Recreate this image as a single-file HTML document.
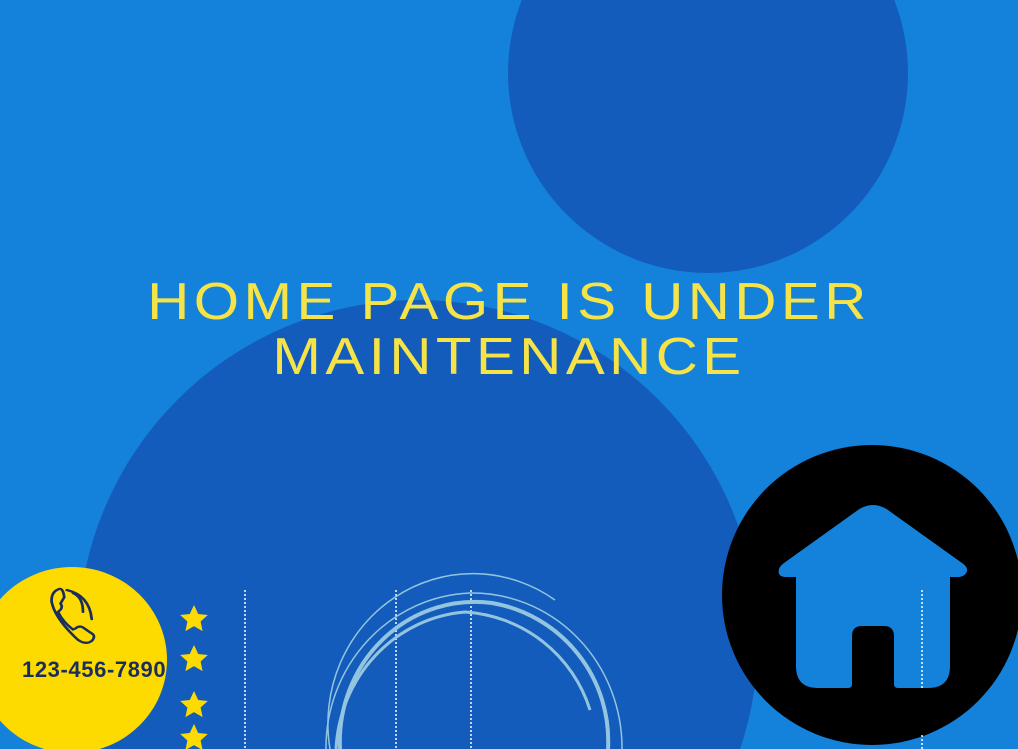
<!DOCTYPE html>
<html><head><style>
html,body{margin:0;padding:0;overflow:hidden;width:1018px;height:749px}
body{position:relative;background:#1482db;font-family:"Liberation Sans",sans-serif}
.t{position:absolute;left:0;width:1018px;text-align:center;color:#f5e348;font-size:52px;letter-spacing:4px;line-height:56px;white-space:nowrap;transform:scaleX(1.12);transform-origin:509px 0}
</style></head><body>
<svg width="1018" height="749" style="position:absolute;left:0;top:0">
<circle cx="708" cy="73" r="200" fill="#145cbb"/>
<circle cx="418" cy="640" r="340" fill="#145cbb"/>
<circle cx="872" cy="595" r="150" fill="#000"/>
<path d="M796 577 H786 Q777 577 779 569 Q780 566 784 563 L858 510 Q873 500 888 510 L962 563 Q968 567 967 571 Q965 577 958 577 H950 V666 Q950 688 928 688 H898 Q894 688 894 684 V636 Q894 626 884 626 H862 Q852 626 852 636 V684 Q852 688 848 688 H818 Q796 688 796 666 Z" fill="#1482db"/>
<ellipse cx="72" cy="660" rx="95" ry="93" fill="#fddb00"/>
<g stroke="#fff" stroke-width="1.5" stroke-dasharray="2 2">
<line x1="245" y1="590" x2="245" y2="749"/>
<line x1="396" y1="590" x2="396" y2="749"/>
<line x1="471" y1="590" x2="471" y2="749"/>
<line x1="922" y1="590" x2="922" y2="688"/>
<line x1="922" y1="735" x2="922" y2="749"/>
</g>
<g fill="none" stroke="#93c5e0">
<path d="M330 749 A145 150 0 0 1 555 600" stroke-width="1.5"/>
<path d="M340 749 A135 140 0 0 1 492 603 A140 140 0 0 1 608 749" stroke-width="4"/>
<path d="M326 749 A150 155 0 0 1 470 593 A150 155 0 0 1 622 749" stroke-width="1.5"/>
<path d="M336 749 A140 145 0 0 1 465 612 A140 140 0 0 1 590 710" stroke-width="3"/>
</g>
<g fill="#fddb00">
<path id="s" d="M194 605 l4.2 9 9.6 1 -7.2 6.5 2 9.6 -8.6 -5 -8.6 5 2 -9.6 -7.2 -6.5 9.6 -1z"/>
<use href="#s" y="40"/><use href="#s" y="86"/><use href="#s" y="119"/>
</g>
<g fill="none" stroke="#1a2e5e" stroke-width="2.2" stroke-linecap="round" transform="translate(73 616) scale(1.25 1.04) translate(-78 -615)">
<path d="M67 589 Q60 592 61 602 Q64 618 82 638 Q88 643 93 639 Q97 634 92 631 L86 626 Q83 624 80 627 L78 628 Q70 621 66 611 L68 609 Q70 606 68 603 L71 597 Q70 588 67 589Z"/>
<path d="M78 593 Q86 597 86 611"/>
<path d="M73 590 Q91 595 93 618"/>
</g>
</svg>
<div style="position:absolute;left:22px;top:657px;font-size:22px;font-weight:bold;color:#1a2e5e;letter-spacing:0.6px">123-456-7890</div>
<div class="t" style="top:274px">HOME PAGE IS UNDER</div>
<div class="t" style="top:329px">MAINTENANCE</div>
</body></html>
